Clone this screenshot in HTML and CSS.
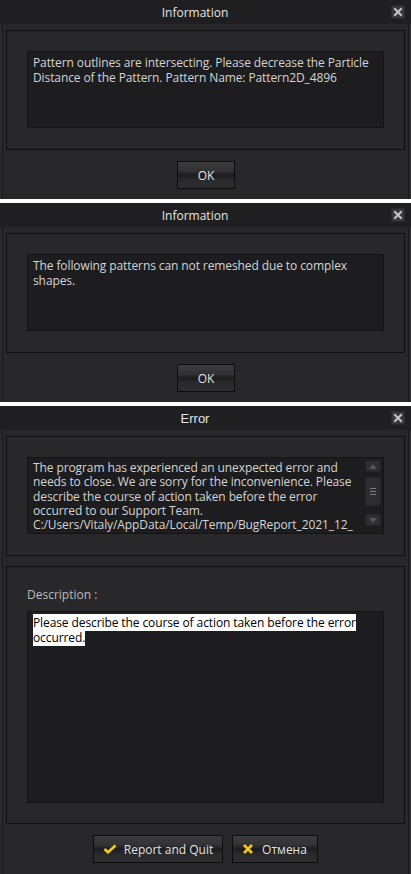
FILE: index.html
```html
<!DOCTYPE html>
<html>
<head>
<meta charset="utf-8">
<link rel="stylesheet" href="styles.css">
</head>
<body>
  <section class="dialog">
    <header class="titlebar">
      <span class="title">Information</span>
      <span class="close"><svg viewBox="0 0 14 14" width="14" height="14"><path d="M4 4 L10 10 M10 4 L4 10" stroke="#c4c4c4" stroke-width="2" stroke-linecap="square"/></svg></span>
    </header>
    <div class="body">
      <div class="panel">
        <div class="textbox">
          <p class="msg">Pattern outlines are intersecting. Please decrease the Particle Distance of the Pattern. Pattern Name: Pattern2D_4896</p>
        </div>
      </div>
      <div class="actions"><button class="btn ok">OK</button></div>
    </div>
  </section>

  <section class="dialog">
    <header class="titlebar">
      <span class="title">Information</span>
      <span class="close"><svg viewBox="0 0 14 14" width="14" height="14"><path d="M4 4 L10 10 M10 4 L4 10" stroke="#c4c4c4" stroke-width="2" stroke-linecap="square"/></svg></span>
    </header>
    <div class="body">
      <div class="panel">
        <div class="textbox">
          <p class="msg">The following patterns can not remeshed due to complex shapes.</p>
        </div>
      </div>
      <div class="actions"><button class="btn ok">OK</button></div>
    </div>
  </section>

  <section class="dialog error">
    <header class="titlebar">
      <span class="title title-error">Error</span>
      <span class="close"><svg viewBox="0 0 14 14" width="14" height="14"><path d="M4 4 L10 10 M10 4 L4 10" stroke="#c4c4c4" stroke-width="2" stroke-linecap="square"/></svg></span>
    </header>
    <div class="body">
      <div class="panel">
        <div class="textbox scrollbox">
          <div class="scrolltext">
            <p class="msg">The program has experienced an unexpected error and needs to close. We are sorry for the inconvenience. Please describe the course of action taken before the error occurred to our Support Team.<br>C:/Users/Vitaly/AppData/Local/Temp/BugReport_2021_12_</p>
          </div>
          <div class="scrollbar">
            <span class="sb-btn"><svg viewBox="0 0 8 5" width="8" height="5"><path d="M0 5 L4 0 L8 5 Z" fill="#555557"/></svg></span>
            <span class="sb-thumb"><svg viewBox="0 0 6 7" width="6" height="7"><path d="M0 0.5 H6 M0 3.5 H6 M0 6.5 H6" stroke="#7a7a7c" stroke-width="1"/></svg></span>
            <span class="sb-space"></span>
            <span class="sb-btn"><svg viewBox="0 0 8 5" width="8" height="5"><path d="M0 0 L8 0 L4 5 Z" fill="#555557"/></svg></span>
          </div>
        </div>
      </div>
      <div class="panel panel-desc">
        <label class="label">Description :</label>
        <div class="textbox textarea">
          <p class="msg"><span class="selected">Please describe the course of action taken before the error occurred.</span></p>
        </div>
      </div>
      <div class="actions">
        <button class="btn wide">
          <svg class="icon" viewBox="0 0 14 10" width="14" height="10"><path d="M1.5 5 L5 8.2 L12.5 1.5" fill="none" stroke="#f2c81c" stroke-width="2.8" stroke-linejoin="miter"/></svg>
          <span>Report and Quit</span>
        </button>
        <button class="btn cancel">
          <svg class="icon" viewBox="0 0 10 10" width="10" height="10"><path d="M1 1 L9 9 M9 1 L1 9" stroke="#f2c81c" stroke-width="2.6"/></svg>
          <span>Отмена</span>
        </button>
      </div>
    </div>
  </section>
</body>
</html>
```
FILE: styles.css
```css
html, body {
  margin: 0;
  padding: 0;
}

body {
  width: 411px;
  height: 874px;
  background: #ffffff;
  display: flex;
  flex-direction: column;
  gap: 4px;
  font-family: "Open Sans", "Noto Sans", sans-serif;
  font-size: 12px;
  color: #d2d2d2;
  overflow: hidden;
}

.dialog {
  background: #28282a;
  display: flex;
  flex-direction: column;
  box-shadow: inset 2px 0 0 #2a2a2c, inset 3px 0 0 #18181a, inset -2px 0 0 #2a2a2c, inset -3px 0 0 #18181a;
}

.dialog.error {
  flex: 1;
}

.titlebar {
  height: 24px;
  background: #1f1f21;
  display: grid;
  grid-template-columns: 1fr 14px;
  column-gap: 1px;
  align-items: center;
  padding-right: 6px;
  flex: none;
}

.title {
  text-align: center;
  color: #e6e6e6;
  font-size: 12px;
  line-height: 16px;
  padding-top: 1px;
}

.title-error {
  font-family: "Liberation Sans", Arial, sans-serif;
  font-size: 13px;
}

.close {
  width: 14px;
  height: 14px;
  background: #38383a;
  box-shadow: inset 0 0 0 1px #2a2a2c;
  display: flex;
}

.body {
  display: flex;
  flex-direction: column;
  padding: 6px 6px 0;
  flex: 1;
}

.panel {
  border: 1px solid #0f0f10;
  background: #28282a;
  padding: 20px;
  height: 120px;
  box-sizing: border-box;
  flex: none;
}

.textbox {
  height: 77px;
  box-sizing: border-box;
  background: #1d1d1f;
  border: 1px solid #141415;
  padding: 4px 6px 4px 5px;
  overflow: hidden;
}

.msg {
  margin: 0;
  line-height: 14.5px;
  color: #d4d4d4;
  letter-spacing: -0.1px;
}

.scrollbox {
  display: flex;
  padding: 0 2px 0 5px;
}

.scrolltext {
  flex: 1;
  padding-top: 3px;
  overflow: hidden;
  margin-right: 4px;
}

.scrolltext .msg {
  line-height: 14.3px;
}

.scrollbar {
  width: 16px;
  flex: none;
  display: flex;
  flex-direction: column;
  padding: 2px 0 7px;
}

.sb-btn {
  height: 12px;
  background: #2e2e30;
  border: 1px solid #252527;
  border-radius: 2px;
  box-sizing: border-box;
  display: flex;
  align-items: center;
  justify-content: center;
}

.sb-thumb {
  height: 29px;
  margin-top: 5px;
  background: #2e2e30;
  border: 1px solid #252527;
  border-radius: 2px;
  box-sizing: border-box;
  display: flex;
  align-items: center;
  justify-content: center;
}

.sb-space {
  flex: 1;
}

.panel-desc {
  height: auto;
  flex: 1;
  margin-top: 10px;
  display: flex;
  flex-direction: column;
  padding: 21px 20px 20px;
}

.label {
  line-height: 14px;
  color: #bdbdbf;
  margin-bottom: 9px;
}

.textarea {
  height: auto;
  flex: 1;
}

.selected {
  background: #ffffff;
  color: #000000;
}

.actions {
  display: flex;
  justify-content: center;
  gap: 9px;
  padding: 11px 0 10px;
  flex: none;
}

.error .actions {
  padding-bottom: 11px;
}

.btn {
  height: 28px;
  box-sizing: border-box;
  border: 1px solid #0d0d0e;
  background: linear-gradient(to bottom, #3c3c3e 0%, #323234 35%, #1c1c1e 50%, #2a2a2c 70%, #2e2e30 100%);
  color: #e2e2e2;
  font-family: "Open Sans", "Noto Sans", sans-serif;
  font-size: 12px;
  padding: 0;
  display: flex;
  align-items: center;
  justify-content: center;
}

.btn.ok {
  width: 58px;
  margin-left: 1px;
}

.btn.wide {
  width: 130px;
  gap: 7px;
}

.btn.cancel {
  width: 86px;
  gap: 9px;
}
```
